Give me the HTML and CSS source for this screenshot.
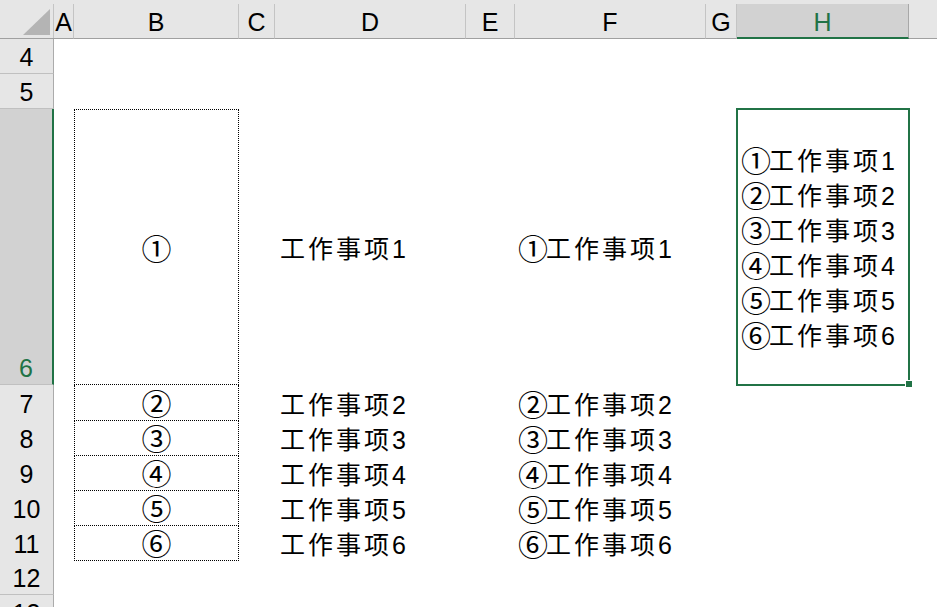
FILE: index.html
```
<html lang="zh-CN">
<head>
    <meta charset="UTF-8">
    <title>Sheet1</title>
    <link rel="stylesheet" href="styles.css">
</head>
<body>
    <div class="sheet">
        <div class="row head">
            <div class="corner"><span class="tri"></span></div>
            <div class="col">A</div>
            <div class="col">B</div>
            <div class="col">C</div>
            <div class="col">D</div>
            <div class="col">E</div>
            <div class="col">F</div>
            <div class="col">G</div>
            <div class="col sel">H</div>
            <div class="col rest"></div>
        </div>

        <div class="row">
            <div class="num">4</div>
            <div></div><div></div><div></div><div></div><div></div><div></div><div></div><div></div><div></div>
        </div>

        <div class="row">
            <div class="num">5</div>
            <div></div><div></div><div></div><div></div><div></div><div></div><div></div><div></div><div></div>
        </div>

        <div class="row tall">
            <div class="num sel">6</div>
            <div></div>
            <div class="cell mark first"><span class="circ">①</span></div>
            <div></div>
            <div class="cell text">工作事项1</div>
            <div></div>
            <div class="cell joined"><span class="circ">①</span>工作事项1</div>
            <div></div>
            <div class="cell active">
                <div class="lines">
                    <div><span class="circ">①</span>工作事项1</div>
                    <div><span class="circ">②</span>工作事项2</div>
                    <div><span class="circ">③</span>工作事项3</div>
                    <div><span class="circ">④</span>工作事项4</div>
                    <div><span class="circ">⑤</span>工作事项5</div>
                    <div><span class="circ">⑥</span>工作事项6</div>
                </div>
            </div>
            <div></div>
        </div>

        <div class="row">
            <div class="num">7</div>
            <div></div>
            <div class="cell mark"><span class="circ">②</span></div>
            <div></div>
            <div class="cell text">工作事项2</div>
            <div></div>
            <div class="cell joined"><span class="circ">②</span>工作事项2</div>
            <div></div><div></div><div></div>
        </div>

        <div class="row">
            <div class="num">8</div>
            <div></div>
            <div class="cell mark"><span class="circ">③</span></div>
            <div></div>
            <div class="cell text">工作事项3</div>
            <div></div>
            <div class="cell joined"><span class="circ">③</span>工作事项3</div>
            <div></div><div></div><div></div>
        </div>

        <div class="row">
            <div class="num">9</div>
            <div></div>
            <div class="cell mark"><span class="circ">④</span></div>
            <div></div>
            <div class="cell text">工作事项4</div>
            <div></div>
            <div class="cell joined"><span class="circ">④</span>工作事项4</div>
            <div></div><div></div><div></div>
        </div>

        <div class="row">
            <div class="num">10</div>
            <div></div>
            <div class="cell mark"><span class="circ">⑤</span></div>
            <div></div>
            <div class="cell text">工作事项5</div>
            <div></div>
            <div class="cell joined"><span class="circ">⑤</span>工作事项5</div>
            <div></div><div></div><div></div>
        </div>

        <div class="row">
            <div class="num">11</div>
            <div></div>
            <div class="cell mark"><span class="circ">⑥</span></div>
            <div></div>
            <div class="cell text">工作事项6</div>
            <div></div>
            <div class="cell joined"><span class="circ">⑥</span>工作事项6</div>
            <div></div><div></div><div></div>
        </div>

        <div class="row">
            <div class="num">12</div>
            <div></div><div></div><div></div><div></div><div></div><div></div><div></div><div></div><div></div>
        </div>

        <div class="row">
            <div class="num">13</div>
            <div></div><div></div><div></div><div></div><div></div><div></div><div></div><div></div><div></div>
        </div>
    </div>
</body>
</html>
```

FILE: styles.css
```
body {
    margin: 0;
    background-color: #ffffff;
    font-family: "Liberation Sans", "Noto Sans CJK SC", sans-serif;
    color: #000000;
    overflow: hidden;
}

.sheet {
    display: flex;
    flex-direction: column;
    width: 937px;
}

.row {
    display: grid;
    grid-template-columns: 54px 20px 165px 36px 191px 49px 191px 31px 172px 1fr;
    height: 35px;
}

.row.tall {
    height: 276px;
}

/* column header */

.row.head {
    height: 39px;
    background-color: #e6e6e6;
}

.corner {
    position: relative;
    border-bottom: 1px solid #a0a0a0;
}

.tri {
    position: absolute;
    left: 23px;
    top: 9px;
    width: 27px;
    height: 26px;
    background-color: #b4b4b4;
    clip-path: polygon(100% 0, 100% 100%, 0 100%);
}

.col {
    margin-top: 4px;
    border-right: 1px solid #c4c4c4;
    border-bottom: 1px solid #a0a0a0;
    display: flex;
    justify-content: center;
    align-items: center;
    padding-top: 3px;
    font-size: 25px;
    line-height: 1;
}

.corner + .col {
    border-left: 1px solid #c4c4c4;
    margin-left: -1px;
}

.col.sel {
    background-color: #d2d2d2;
    color: #217346;
    border-right-color: #a8a8a8;
    border-bottom: 2px solid #217346;
}

.col.rest {
    border-right: none;
}

/* row header */

.num {
    background-color: #e6e6e6;
    border-right: 1px solid #ababab;
    border-bottom: 1px solid #c0c0c0;
    display: flex;
    justify-content: center;
    align-items: center;
    padding-top: 3px;
    font-size: 25px;
    line-height: 1;
}

.num.sel {
    background-color: #d2d2d2;
    color: #217346;
    border-right: 2px solid #217346;
    align-items: flex-end;
    padding-bottom: 3px;
}

/* cells */

.cell {
    display: flex;
    align-items: center;
    padding-top: 5px;
    font-size: 25px;
    line-height: 1;
    letter-spacing: 3px;
    white-space: nowrap;
}

.circ {
    font-size: 30px;
    letter-spacing: -2px;
    vertical-align: -2px;
}

.mark {
    justify-content: center;
    border-left: 1px dotted #000000;
    border-right: 1px dotted #000000;
    border-bottom: 1px dotted #000000;
}

.mark .circ {
    letter-spacing: 0;
}

.mark.first {
    border-top: 1px dotted #000000;
}

.text {
    padding-left: 5px;
}

.joined {
    padding-left: 3px;
}

.active {
    position: relative;
    padding-left: 4px;
    padding-top: 3px;
    outline: 2px solid #217346;
    outline-offset: -1px;
}

.active::after {
    content: "";
    position: absolute;
    right: -4px;
    bottom: -3px;
    width: 6px;
    height: 6px;
    background-color: #217346;
    border: 1px solid #ffffff;
}

.lines {
    line-height: 35px;
}
```
